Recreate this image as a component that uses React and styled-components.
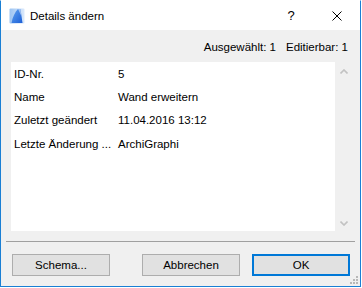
import styled, { createGlobalStyle } from 'styled-components'

const GlobalStyle = createGlobalStyle`
  html, body {
    margin: 0;
    padding: 0;
    background: #ffffff;
  }
  body {
    font-family: "Segoe UI", "Liberation Sans", Arial, sans-serif;
    font-size: 11.5px;
    color: #000;
  }
`

const Window = styled.div`
  position: relative;
  width: 361px;
  height: 287px;
  box-sizing: border-box;
  border: 1px solid #1a7fd4;
  border-top-color: #ffffff;
  display: flex;
  flex-direction: column;
  background: #f0f0f0;
`

const TitleBar = styled.div`
  height: 29px;
  background: #ffffff;
  display: flex;
  align-items: center;
  padding-left: 8px;
`

const Title = styled.span`
  margin-left: 5px;
  font-size: 11.5px;
  color: #000;
  flex: 1;
`

const TitleButton = styled.div`
  width: 46px;
  height: 29px;
  display: flex;
  align-items: center;
  justify-content: center;
  font-size: ${({ $size }) => $size || 12}px;
`

const Header = styled.div`
  padding: 10px 12px 0 0;
  line-height: 14px;
  display: flex;
  justify-content: flex-end;
  gap: 10px;
`

const Panel = styled.div`
  margin: 8px 8px 0 10px;
  height: 169px;
  display: flex;
`

const List = styled.div`
  flex: 1;
  background: #ffffff;
  padding: 0 3px;
`

const Row = styled.div`
  height: 23.33px;
  display: flex;
  align-items: center;
`

const Label = styled.span`
  width: 104px;
  white-space: nowrap;
`

const Value = styled.span``

const Scrollbar = styled.div`
  width: 17px;
  display: flex;
  flex-direction: column;
  justify-content: space-between;
  align-items: center;
  padding: 7px 0 5px;
`

const Separator = styled.div`
  margin: 10px 5px 0;
  height: 1px;
  background: #a0a0a0;
`

const ButtonRow = styled.div`
  display: flex;
  padding-left: 11px;
  margin-top: 12px;
`

const Button = styled.button`
  width: 98px;
  height: 22px;
  box-sizing: border-box;
  margin-left: ${({ $gap }) => $gap || 0}px;
  background: #e1e1e1;
  border: ${({ $primary }) => ($primary ? '2px solid #0078d7' : '1px solid #adadad')};
  font-family: "Segoe UI", "Liberation Sans", Arial, sans-serif;
  font-size: 11.5px;
  color: #000;
  padding: 0;
`

const Grip = styled.svg`
  position: absolute;
  right: 2px;
  bottom: 2px;
`

const AppIcon = () => (
  <svg width="16" height="16" viewBox="0 0 16 16">
    <defs>
      <linearGradient id="bg" x1="0" y1="0" x2="1" y2="0">
        <stop offset="0" stopColor="#9cc4f2" />
        <stop offset="1" stopColor="#dbe9fb" />
      </linearGradient>
      <linearGradient id="fin" x1="0" y1="0" x2="1" y2="1">
        <stop offset="0" stopColor="#5fa2f0" />
        <stop offset="1" stopColor="#1c5fd6" />
      </linearGradient>
    </defs>
    <rect x="0.5" y="0.5" width="15" height="15" rx="1" fill="url(#bg)" />
    <path d="M2.5 15 C3.5 9 6 4 9 1 L11.5 1 L13.5 15 Z" fill="url(#fin)" />
    <path d="M9 1 L11.5 1 L12.3 8 C11 5 10 3 9 1 Z" fill="#ffffff" opacity="0.5" />
  </svg>
)

const rows = [
  ['ID-Nr.', '5'],
  ['Name', 'Wand erweitern'],
  ['Zuletzt geändert', '11.04.2016 13:12'],
  ['Letzte Änderung ...', 'ArchiGraphi'],
]

const App = () => {
  return (
    <>
      <GlobalStyle />
      <Window>
        <TitleBar>
          <AppIcon />
          <Title>Details ändern</Title>
          <TitleButton $size={13}>?</TitleButton>
          <TitleButton>
            <svg width="10" height="10" viewBox="0 0 10 10">
              <path d="M0.5 0.5 L9.5 9.5 M9.5 0.5 L0.5 9.5" stroke="#000" strokeWidth="1" />
            </svg>
          </TitleButton>
        </TitleBar>
        <Header>
          <span>Ausgewählt: 1</span>
          <span>Editierbar: 1</span>
        </Header>
        <Panel>
          <List>
            {rows.map(([k, v]) => (
              <Row key={k}>
                <Label>{k}</Label>
                <Value>{v}</Value>
              </Row>
            ))}
          </List>
          <Scrollbar>
            <svg width="8" height="5" viewBox="0 0 8 5">
              <path d="M0.5 4.5 L4 1 L7.5 4.5" stroke="#c2c2c2" strokeWidth="1.6" fill="none" />
            </svg>
            <svg width="8" height="5" viewBox="0 0 8 5">
              <path d="M0.5 0.5 L4 4 L7.5 0.5" stroke="#c2c2c2" strokeWidth="1.6" fill="none" />
            </svg>
          </Scrollbar>
        </Panel>
        <Separator />
        <ButtonRow>
          <Button>Schema...</Button>
          <Button $gap={32}>Abbrechen</Button>
          <Button $gap={12} $primary>OK</Button>
        </ButtonRow>
        <Grip width="8" height="8" viewBox="0 0 8 8">
          <g fill="#b8b8b8">
            <rect x="6" y="0" width="2" height="2" />
            <rect x="3" y="3" width="2" height="2" />
            <rect x="6" y="3" width="2" height="2" />
            <rect x="0" y="6" width="2" height="2" />
            <rect x="3" y="6" width="2" height="2" />
            <rect x="6" y="6" width="2" height="2" />
          </g>
        </Grip>
      </Window>
    </>
  )
}

export default App
